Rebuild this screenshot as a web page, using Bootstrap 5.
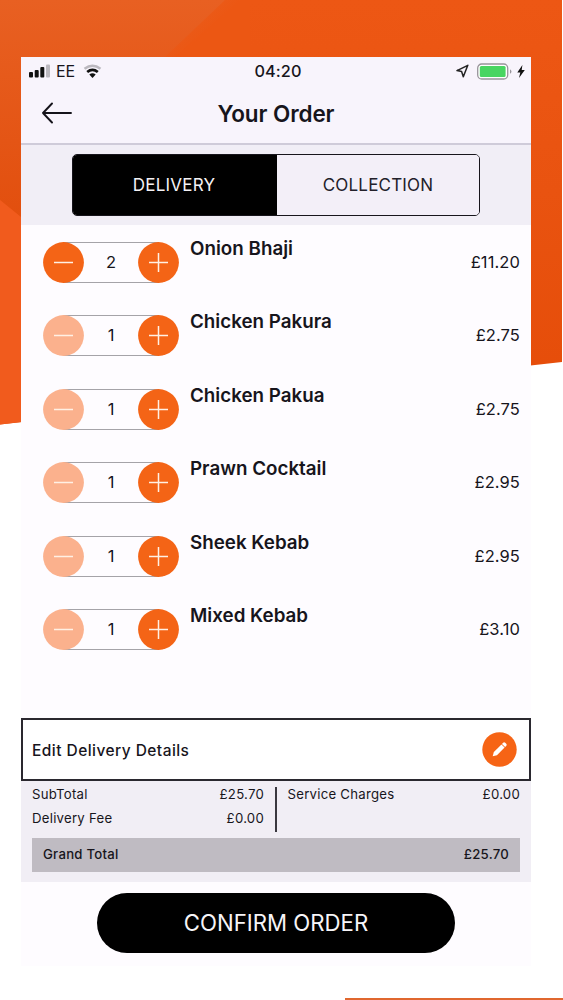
<!DOCTYPE html>
<html lang="en">
<head>
<meta charset="utf-8">
<meta name="viewport" content="width=device-width, initial-scale=1">
<title>Your Order</title>
<link href="https://cdn.jsdelivr.net/npm/bootstrap@5.3.0/dist/css/bootstrap.min.css" rel="stylesheet">
<style>
  body { font-family: Inter, "Liberation Sans", sans-serif; color: #17151c; background: #fff; line-height: 1; }
  .stage { width: 563px; height: 1000px; padding: 57px 32px 0 21px; }
  .backdrop { top: 0; left: 0; z-index: 0; }
  .phone { z-index: 1; height: 909px; background: #fefcff; }
  .topbar { height: 88px; background: #f8f4fc; border-bottom: 2px solid #cfcbd9; }
  .status { height: 28px; padding: 0 6px 0 7px; }
  .status > div { flex: 1 1 0; }
  .carrier { font-size: 16px; letter-spacing: -.2px; margin: 0 8px 0 5px; }
  .clock { font-size: 16.3px; font-weight: 500; letter-spacing: .1px; padding-left: 3px; }
  .titlebar { height: 56px; padding: 0 21px; }
  .screen-title { font-size: 22.5px; font-weight: 600; letter-spacing: -.1px; }
  .switcher { height: 80px; background: #f1eef6; padding: 9px 51px 0; }
  .switcher .btn-group { height: 62px; border: 1.5px solid #17151c; border-radius: 5px; overflow: hidden; }
  .switcher .btn { flex: 1 1 0; width: 0; border: 0; border-radius: 0; font-size: 17px; letter-spacing: .2px; line-height: 1; color: #22202a; background: #f3eff8; margin-left: 0 !important; }
  .switcher .btn.active { background: #000; color: #f4f2f5; padding-right: 14px; }
  .items { height: 493px; padding: 16.5px 11px 0 22px; }
  .item { height: 73.5px; }
  .stepper { width: 136px; height: 41px; }
  .stepper .rail { height: 41px; border-top: 1.5px solid #a5a3a8; border-bottom: 1.5px solid #a5a3a8; margin: 0 -20px; }
  .stepper svg { z-index: 1; flex: none; }
  .qty { font-size: 16.5px; }
  .dish { font-size: 18.8px; font-weight: 600; margin-left: 11px; line-height: 14px; }
  .price { font-size: 16.5px; line-height: 41px; letter-spacing: .1px; }
  .edit { height: 63px; border: 2px solid #2a282f; background: #fff; padding: 0 12px 0 9px; }
  .edit-label { font-size: 15.5px; font-weight: 500; letter-spacing: .45px; padding-top: 2px; }
  .totals { height: 101px; background: #f1eef5; padding: 5px 11px 0; font-size: 13.2px; letter-spacing: .25px; }
  .charges { height: 46px; }
  .charges .left-side { width: 232px; }
  .charges .divider { width: 1.5px; margin: 1px 11px 0; background: #3a3840; }
  .line { height: 17px; margin-bottom: 7px; }
  .grand { height: 34px; margin-top: 6px; padding: 0 11px; background: #bfbbc2; font-weight: 500; }
  .confirm { width: 358px; height: 60px; margin: 11px auto 0 76px; background: #000; color: #f7f5f8; font-size: 22.2px; line-height: 1; border: 0; }
</style>
</head>
<body>
<div class="stage position-relative overflow-hidden">
  <svg class="backdrop position-absolute" width="563" height="1000" viewBox="0 0 563 1000" aria-hidden="true">
    <defs>
      <linearGradient id="base" x1="0" y1="0" x2="0" y2="1"><stop offset="0" stop-color="#ed5714"/><stop offset=".45" stop-color="#e95310"/><stop offset="1" stop-color="#e54c08"/></linearGradient>
      <linearGradient id="shade" x1="0" y1="0" x2="0" y2="1"><stop offset="0" stop-color="#e86022"/><stop offset="1" stop-color="#e24f0e"/></linearGradient>
      <linearGradient id="edge" x1="165" y1="20" x2="205" y2="60" gradientUnits="userSpaceOnUse"><stop offset="0" stop-color="#ec5713" stop-opacity="0"/><stop offset=".7" stop-color="#ec5713"/></linearGradient>
    </defs>
    <path d="M0 0H562V362L0 424.500Z" fill="url(#base)"/>
    <path d="M0 0H240L165 65L21 217L0 200Z" fill="url(#shade)"/>
    <path d="M225 0H250V57H165Z" fill="url(#edge)"/>
    <path d="M0 200L21 217V422L0 424.500Z" fill="#f15b1d"/>
    <path d="M345 998H563V1000H345Z" fill="#e0672f"/>
  </svg>

  <main class="phone position-relative">
    <header class="topbar">
      <div class="status d-flex align-items-center">
        <div class="d-flex align-items-center">
          <svg width="23" height="14" viewBox="0 0 23 14"><g fill="#111"><rect x="1" y="8" width="4" height="5.500" rx="1"/><rect x="6.700" y="6" width="4" height="7.500" rx="1"/><rect x="12.300" y="3" width="4" height="10.500" rx="1"/></g><rect x="18" y=".500" width="4" height="13" rx="1" fill="#bbb8bf"/></svg>
          <span class="carrier">EE</span>
          <svg width="19" height="14" viewBox="0 0 19 14" fill="none"><path d="M1.500 4.800Q9.500-1.400 17.500 4.800" stroke="#bbb8bf" stroke-width="2.400"/><path d="M4.200 8Q9.500 3.800 14.800 8" stroke="#111" stroke-width="2.800"/><path d="M6.300 10.600Q9.500 8 12.700 10.600L9.500 14Z" fill="#111"/></svg>
        </div>
        <span class="clock">04:20</span>
        <div class="d-flex align-items-center justify-content-end">
          <svg width="13" height="14" viewBox="0 0 13 14" fill="none" stroke="#222" stroke-width="1.500" stroke-linejoin="round"><path d="M11.800 1.300L1 6.600L5.600 7.600L7.300 12.700Z"/></svg>
          <svg class="ms-2" width="36" height="17" viewBox="0 0 36 17"><rect x=".700" y="1" width="30" height="15" rx="4" fill="#fff" stroke="#98949b" stroke-width="1.300"/><rect x="2.800" y="3" width="25.800" height="11" rx="1.500" fill="#48d562"/><path d="M33 6.200Q36 8.500 33 10.800Z" fill="#98949b"/></svg>
          <svg class="ms-1" width="8" height="13" viewBox="0 0 8 13"><path d="M5.400 .100L.300 7.400H3.300L2 12.900L7.800 5.100H4.700Z" fill="#111"/></svg>
        </div>
      </div>
      <div class="titlebar d-flex align-items-center justify-content-between">
        <svg width="30" height="22" viewBox="0 0 30 22" fill="none" stroke="#15131a" stroke-width="1.900" stroke-linecap="round" stroke-linejoin="round"><path d="M29 11H1M10 1.500L1 11L10 20.500"/></svg>
        <h1 class="screen-title m-0">Your Order</h1>
        <span style="width:30px"></span>
      </div>
    </header>

    <section class="switcher">
      <div class="btn-group d-flex" role="group">
        <button class="btn active" type="button">DELIVERY</button>
        <button class="btn" type="button">COLLECTION</button>
      </div>
    </section>

    <section class="items" id="items"></section>

    <section class="edit d-flex align-items-center justify-content-between">
      <span class="edit-label">Edit Delivery Details</span>
      <svg width="35" height="35" viewBox="0 0 35 35"><circle cx="17.500" cy="17.500" r="17.200" fill="#f66415"/><g transform="translate(17.500 17.500) rotate(-45)" fill="#fff"><path d="M-9.600 0L-5.800-2.200H5V2.200H-5.800Z"/><path d="M5.700-2.200H7.300Q8.800-2.200 8.800-.700V.700Q8.800 2.200 7.300 2.200H5.700Z"/></g></svg>
    </section>

    <section class="totals">
      <div class="charges d-flex">
        <div class="left-side">
          <div class="line d-flex align-items-center justify-content-between"><span>SubTotal</span><span>£25.70</span></div>
          <div class="line d-flex align-items-center justify-content-between"><span>Delivery Fee</span><span>£0.00</span></div>
        </div>
        <div class="divider"></div>
        <div class="flex-grow-1">
          <div class="line d-flex align-items-center justify-content-between"><span>Service Charges</span><span>£0.00</span></div>
        </div>
      </div>
      <div class="grand d-flex align-items-center justify-content-between"><span>Grand Total</span><span>£25.70</span></div>
    </section>

    <button class="confirm btn rounded-pill d-block" type="button">CONFIRM ORDER</button>
  </main>
</div>
<script>
  const order = [
    ["Onion Bhaji", 2, "£11.20"], ["Chicken Pakura", 1, "£2.75"], ["Chicken Pakua", 1, "£2.75"],
    ["Prawn Cocktail", 1, "£2.95"], ["Sheek Kebab", 1, "£2.95"], ["Mixed Kebab", 1, "£3.10"]
  ];
  const knob = (fill, sign) => `<svg width="41" height="41" viewBox="0 0 41 41"><circle cx="20.5" cy="20.5" r="20.4" fill="${fill}"/><path d="${sign}" stroke="#fff0e4" stroke-width="1.5"/></svg>`;
  document.getElementById("items").innerHTML = order.map(([name, qty, price]) => `
    <div class="item d-flex align-items-start">
      <div class="stepper d-flex">
        ${knob(qty > 1 ? "#f46416" : "#fbb18d", "M11 20.500H30")}
        <div class="rail flex-grow-1 d-flex align-items-center justify-content-center"><span class="qty">${qty}</span></div>
        ${knob("#f46416", "M11 20.500H30M20.500 11V30")}
      </div>
      <div class="dish flex-grow-1">${name}</div>
      <div class="price">${price}</div>
    </div>`).join("");
</script>
<script src="https://cdn.jsdelivr.net/npm/bootstrap@5.3.0/dist/js/bootstrap.bundle.min.js"></script>
</body>
</html>
